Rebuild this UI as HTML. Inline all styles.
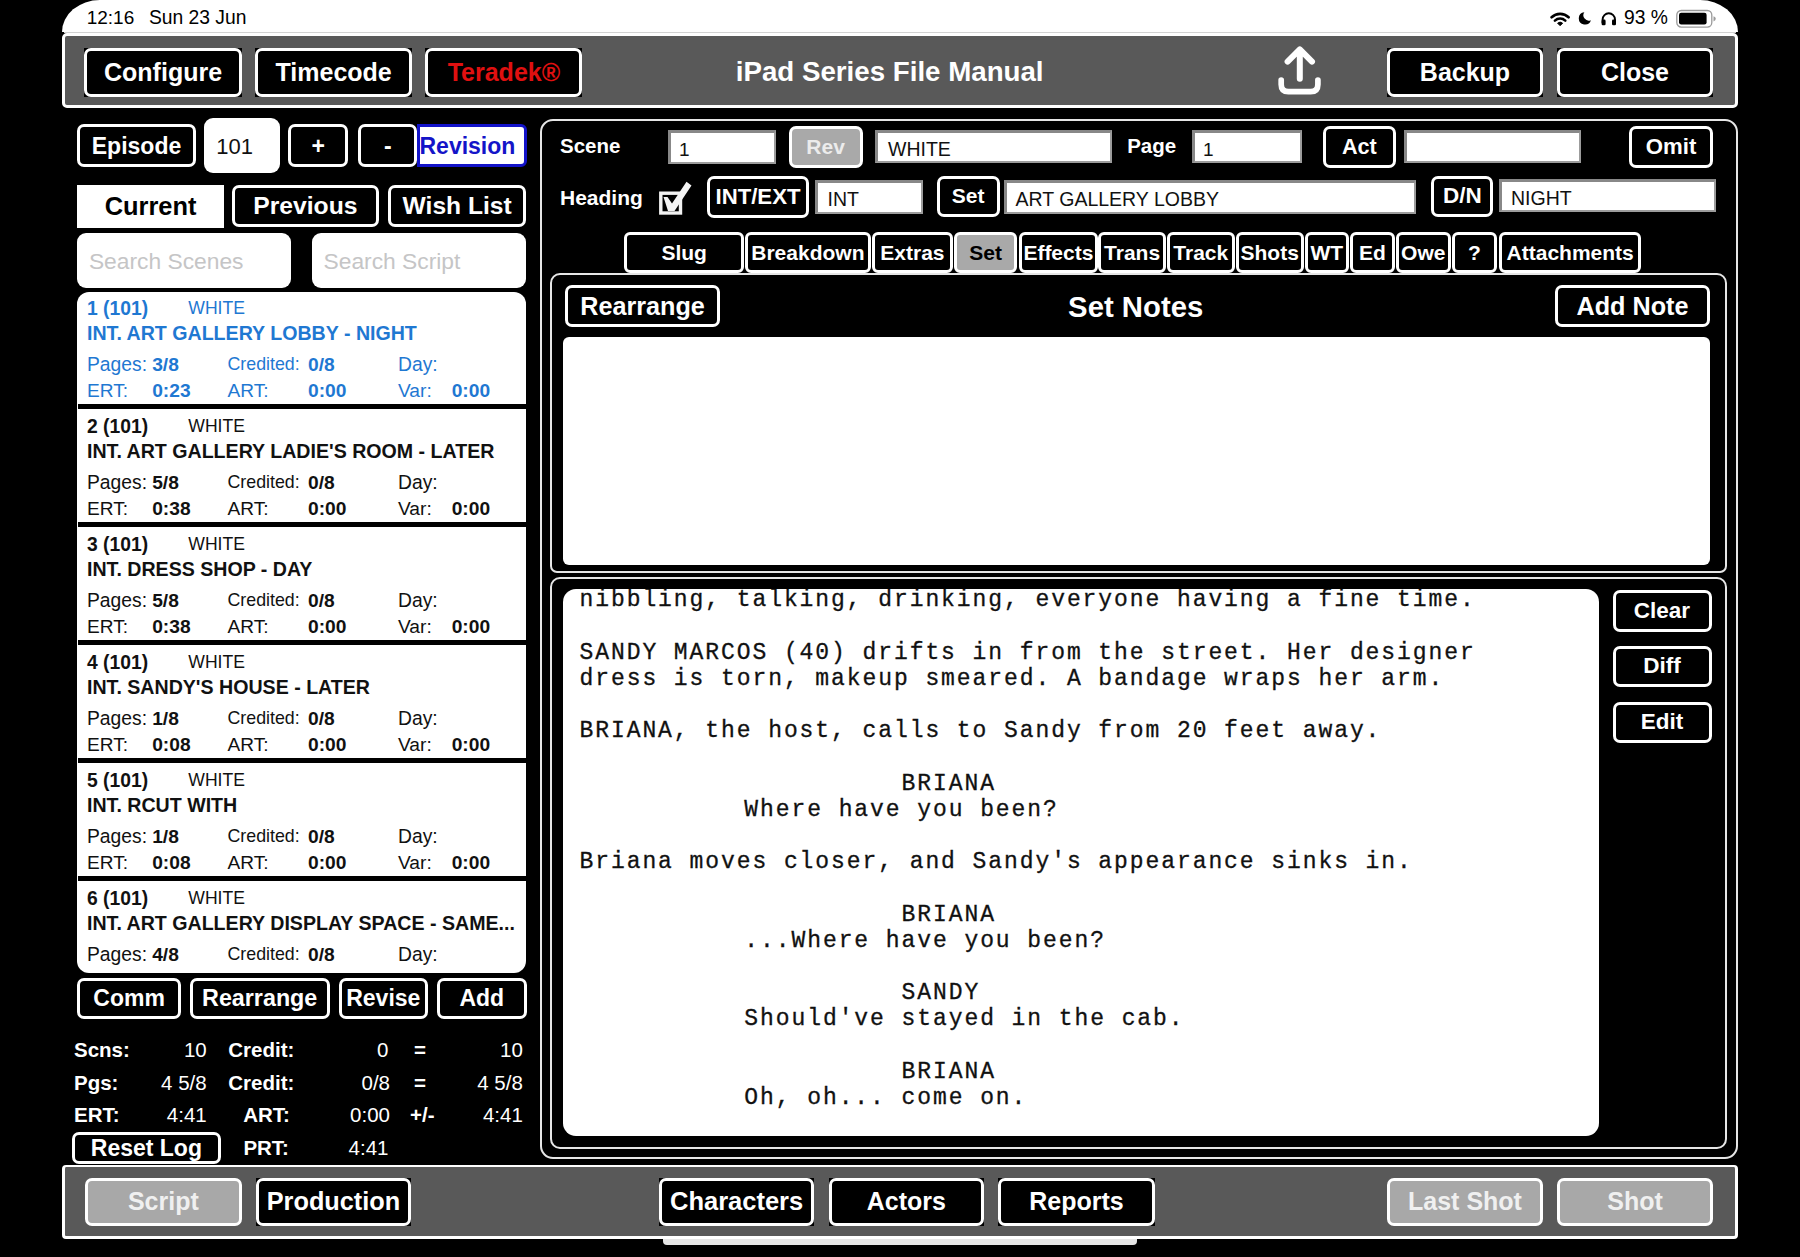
<!DOCTYPE html><html><head><meta charset="utf-8"><style>
html,body{margin:0;padding:0;background:#000;width:1800px;height:1257px;overflow:hidden;position:relative}
.b{position:absolute;box-sizing:border-box}
.bi{position:absolute;inset:0;box-sizing:border-box;display:flex;align-items:center;justify-content:center;font-family:"Liberation Sans",sans-serif;font-weight:700;white-space:pre}
</style></head><body>
<div style="position:absolute;left:62px;top:0px;width:1676px;height:32.2px;background:#fff;border-radius:38px 38px 0 0/32px 32px 0 0"></div>
<div style="position:absolute;left:64px;top:32.2px;width:1672px;height:1px;background:#d2d2d2"></div>
<div style="position:absolute;left:86.7px;top:7.8px;font:400 19px/19px 'Liberation Sans', sans-serif;color:#000;white-space:pre;">12:16</div>
<div style="position:absolute;left:148.9px;top:7.6px;font:400 19.3px/19.3px 'Liberation Sans', sans-serif;color:#000;white-space:pre;">Sun 23 Jun</div>
<div style="position:absolute;left:1624px;top:7.7px;font:400 19.3px/19.3px 'Liberation Sans', sans-serif;color:#000;white-space:pre;">93 %</div>
<div style="position:absolute;left:62px;top:32.8px;width:1676px;height:75.2px;background:#595959;border:3.3px solid #fff;border-radius:5px;box-sizing:border-box"></div>
<div class="b" style="left:84.4px;top:47.8px;width:157.3px;height:48.9px;background:#000;"><div class="bi" style="border:3px solid #fff;border-radius:7px;background:#000;color:#fff;font-size:25px;">Configure</div></div>
<div class="b" style="left:255px;top:47.8px;width:157.3px;height:48.9px;background:#000;"><div class="bi" style="border:3px solid #fff;border-radius:7px;background:#000;color:#fff;font-size:25px;">Timecode</div></div>
<div class="b" style="left:425.3px;top:47.8px;width:157.2px;height:48.9px;background:#000;"><div class="bi" style="border:3px solid #fff;border-radius:7px;background:#000;color:#e01010;font-size:25px;">Teradek®</div></div>
<div class="b" style="left:1386.7px;top:47.8px;width:156.6px;height:48.9px;background:#000;"><div class="bi" style="border:3px solid #fff;border-radius:7px;background:#000;color:#fff;font-size:25px;">Backup</div></div>
<div class="b" style="left:1556.7px;top:47.8px;width:156.6px;height:48.9px;background:#000;"><div class="bi" style="border:3px solid #fff;border-radius:7px;background:#000;color:#fff;font-size:25px;">Close</div></div>
<div style="position:absolute;left:389.7px;width:1000px;text-align:center;top:57.6px;font:700 27.7px/27.7px 'Liberation Sans', sans-serif;color:#fff;white-space:pre;">iPad Series File Manual</div>
<div class="b" style="left:77px;top:124.3px;width:119px;height:42.7px;background:#000;"><div class="bi" style="border:3px solid #fff;border-radius:7px;background:#000;color:#fff;font-size:23px;padding-top:1.5px">Episode</div></div>
<div style="position:absolute;left:204.4px;top:118px;width:75.3px;height:55.2px;background:#fff;border-radius:9px"></div>
<div style="position:absolute;left:216.3px;top:135.6px;font:400 22px/22px 'Liberation Sans', sans-serif;color:#111;white-space:pre;">101</div>
<div class="b" style="left:288.4px;top:124.4px;width:59.5px;height:42.2px;background:#000;"><div class="bi" style="border:3px solid #fff;border-radius:7px;background:#000;color:#fff;font-size:23px;padding-top:1.5px">+</div></div>
<div class="b" style="left:358.4px;top:124.4px;width:58.8px;height:42.2px;background:#000;"><div class="bi" style="border:3px solid #fff;border-radius:7px;background:#000;color:#fff;font-size:23px;padding-top:1.5px">-</div></div>
<div class="b" style="left:416.5px;top:124.4px;width:110.1px;height:43.1px;background:#fff;border:3px solid #1212c8;border-radius:0 6px 6px 0"><div class="bi" style="color:#1414c8;font-size:23px;justify-content:flex-start;padding-left:0px;padding-top:1.5px">Revision</div></div>
<div style="position:absolute;left:77px;top:185px;width:147.2px;height:42.8px;background:#fff"></div>
<div style="position:absolute;left:-349.4px;width:1000px;text-align:center;top:193.6px;font:700 25.4px/25.4px 'Liberation Sans', sans-serif;color:#000;white-space:pre;">Current</div>
<div class="b" style="left:232px;top:185.4px;width:146.7px;height:41.6px;background:#000;"><div class="bi" style="border:3px solid #fff;border-radius:7px;background:#000;color:#fff;font-size:24.7px;">Previous</div></div>
<div class="b" style="left:388px;top:185.4px;width:138.3px;height:41.6px;background:#000;"><div class="bi" style="border:3px solid #fff;border-radius:7px;background:#000;color:#fff;font-size:24.6px;">Wish List</div></div>
<div style="position:absolute;left:77px;top:232.7px;width:213.7px;height:54.9px;background:#fff;border-radius:9px"></div>
<div style="position:absolute;left:312px;top:232.7px;width:214px;height:54.9px;background:#fff;border-radius:9px"></div>
<div style="position:absolute;left:88.9px;top:249.5px;font:400 22.8px/22.8px 'Liberation Sans', sans-serif;color:#c5c5c6;white-space:pre;">Search Scenes</div>
<div style="position:absolute;left:323.5px;top:249.5px;font:400 22.8px/22.8px 'Liberation Sans', sans-serif;color:#c5c5c6;white-space:pre;">Search Script</div>
<div style="position:absolute;left:77px;top:291.8px;width:449px;height:681.6px;background:#fff;border-radius:12px;overflow:hidden">
<div style="position:absolute;left:10px;top:7.1px;font:700 19.3px/19.3px 'Liberation Sans', sans-serif;color:#1f78d2;white-space:pre;">1 (101)</div>
<div style="position:absolute;left:111.3px;top:8.5px;font:400 17.6px/17.6px 'Liberation Sans', sans-serif;color:#1f78d2;white-space:pre;">WHITE</div>
<div style="position:absolute;left:10px;top:31.8px;font:700 19.6px/19.6px 'Liberation Sans', sans-serif;color:#1f78d2;white-space:pre;">INT. ART GALLERY LOBBY - NIGHT</div>
<div style="position:absolute;left:10px;top:63.5px;font:400 19.3px/19.3px 'Liberation Sans', sans-serif;color:#1f78d2;white-space:pre;">Pages:</div>
<div style="position:absolute;left:75.2px;top:63.5px;font:700 19.2px/19.2px 'Liberation Sans', sans-serif;color:#1f78d2;white-space:pre;">3/8</div>
<div style="position:absolute;left:150.5px;top:64.7px;font:400 17.8px/17.8px 'Liberation Sans', sans-serif;color:#1f78d2;white-space:pre;">Credited:</div>
<div style="position:absolute;left:231px;top:63.5px;font:700 19.2px/19.2px 'Liberation Sans', sans-serif;color:#1f78d2;white-space:pre;">0/8</div>
<div style="position:absolute;left:321px;top:63.5px;font:400 19.3px/19.3px 'Liberation Sans', sans-serif;color:#1f78d2;white-space:pre;">Day:</div>
<div style="position:absolute;left:10px;top:89.2px;font:400 19.1px/19.1px 'Liberation Sans', sans-serif;color:#1f78d2;white-space:pre;">ERT:</div>
<div style="position:absolute;left:75.2px;top:89.1px;font:700 19.2px/19.2px 'Liberation Sans', sans-serif;color:#1f78d2;white-space:pre;">0:23</div>
<div style="position:absolute;left:150.5px;top:89.2px;font:400 19.1px/19.1px 'Liberation Sans', sans-serif;color:#1f78d2;white-space:pre;">ART:</div>
<div style="position:absolute;left:231px;top:89.1px;font:700 19.2px/19.2px 'Liberation Sans', sans-serif;color:#1f78d2;white-space:pre;">0:00</div>
<div style="position:absolute;left:321px;top:89.1px;font:400 19.2px/19.2px 'Liberation Sans', sans-serif;color:#1f78d2;white-space:pre;">Var:</div>
<div style="position:absolute;left:374.7px;top:89.1px;font:700 19.2px/19.2px 'Liberation Sans', sans-serif;color:#1f78d2;white-space:pre;">0:00</div>
<div style="position:absolute;left:1px;top:112.1px;width:448px;height:5.5px;background:#000"></div>
<div style="position:absolute;left:10px;top:125.1px;font:700 19.3px/19.3px 'Liberation Sans', sans-serif;color:#111;white-space:pre;">2 (101)</div>
<div style="position:absolute;left:111.3px;top:126.5px;font:400 17.6px/17.6px 'Liberation Sans', sans-serif;color:#111;white-space:pre;">WHITE</div>
<div style="position:absolute;left:10px;top:149.8px;font:700 19.6px/19.6px 'Liberation Sans', sans-serif;color:#111;white-space:pre;">INT. ART GALLERY LADIE'S ROOM - LATER</div>
<div style="position:absolute;left:10px;top:181.5px;font:400 19.3px/19.3px 'Liberation Sans', sans-serif;color:#111;white-space:pre;">Pages:</div>
<div style="position:absolute;left:75.2px;top:181.5px;font:700 19.2px/19.2px 'Liberation Sans', sans-serif;color:#111;white-space:pre;">5/8</div>
<div style="position:absolute;left:150.5px;top:182.7px;font:400 17.8px/17.8px 'Liberation Sans', sans-serif;color:#111;white-space:pre;">Credited:</div>
<div style="position:absolute;left:231px;top:181.5px;font:700 19.2px/19.2px 'Liberation Sans', sans-serif;color:#111;white-space:pre;">0/8</div>
<div style="position:absolute;left:321px;top:181.5px;font:400 19.3px/19.3px 'Liberation Sans', sans-serif;color:#111;white-space:pre;">Day:</div>
<div style="position:absolute;left:10px;top:207.2px;font:400 19.1px/19.1px 'Liberation Sans', sans-serif;color:#111;white-space:pre;">ERT:</div>
<div style="position:absolute;left:75.2px;top:207.1px;font:700 19.2px/19.2px 'Liberation Sans', sans-serif;color:#111;white-space:pre;">0:38</div>
<div style="position:absolute;left:150.5px;top:207.2px;font:400 19.1px/19.1px 'Liberation Sans', sans-serif;color:#111;white-space:pre;">ART:</div>
<div style="position:absolute;left:231px;top:207.1px;font:700 19.2px/19.2px 'Liberation Sans', sans-serif;color:#111;white-space:pre;">0:00</div>
<div style="position:absolute;left:321px;top:207.1px;font:400 19.2px/19.2px 'Liberation Sans', sans-serif;color:#111;white-space:pre;">Var:</div>
<div style="position:absolute;left:374.7px;top:207.1px;font:700 19.2px/19.2px 'Liberation Sans', sans-serif;color:#111;white-space:pre;">0:00</div>
<div style="position:absolute;left:1px;top:230.1px;width:448px;height:5.5px;background:#000"></div>
<div style="position:absolute;left:10px;top:243.1px;font:700 19.3px/19.3px 'Liberation Sans', sans-serif;color:#111;white-space:pre;">3 (101)</div>
<div style="position:absolute;left:111.3px;top:244.5px;font:400 17.6px/17.6px 'Liberation Sans', sans-serif;color:#111;white-space:pre;">WHITE</div>
<div style="position:absolute;left:10px;top:267.8px;font:700 19.6px/19.6px 'Liberation Sans', sans-serif;color:#111;white-space:pre;">INT. DRESS SHOP - DAY</div>
<div style="position:absolute;left:10px;top:299.5px;font:400 19.3px/19.3px 'Liberation Sans', sans-serif;color:#111;white-space:pre;">Pages:</div>
<div style="position:absolute;left:75.2px;top:299.5px;font:700 19.2px/19.2px 'Liberation Sans', sans-serif;color:#111;white-space:pre;">5/8</div>
<div style="position:absolute;left:150.5px;top:300.7px;font:400 17.8px/17.8px 'Liberation Sans', sans-serif;color:#111;white-space:pre;">Credited:</div>
<div style="position:absolute;left:231px;top:299.5px;font:700 19.2px/19.2px 'Liberation Sans', sans-serif;color:#111;white-space:pre;">0/8</div>
<div style="position:absolute;left:321px;top:299.5px;font:400 19.3px/19.3px 'Liberation Sans', sans-serif;color:#111;white-space:pre;">Day:</div>
<div style="position:absolute;left:10px;top:325.2px;font:400 19.1px/19.1px 'Liberation Sans', sans-serif;color:#111;white-space:pre;">ERT:</div>
<div style="position:absolute;left:75.2px;top:325.1px;font:700 19.2px/19.2px 'Liberation Sans', sans-serif;color:#111;white-space:pre;">0:38</div>
<div style="position:absolute;left:150.5px;top:325.2px;font:400 19.1px/19.1px 'Liberation Sans', sans-serif;color:#111;white-space:pre;">ART:</div>
<div style="position:absolute;left:231px;top:325.1px;font:700 19.2px/19.2px 'Liberation Sans', sans-serif;color:#111;white-space:pre;">0:00</div>
<div style="position:absolute;left:321px;top:325.1px;font:400 19.2px/19.2px 'Liberation Sans', sans-serif;color:#111;white-space:pre;">Var:</div>
<div style="position:absolute;left:374.7px;top:325.1px;font:700 19.2px/19.2px 'Liberation Sans', sans-serif;color:#111;white-space:pre;">0:00</div>
<div style="position:absolute;left:1px;top:348.1px;width:448px;height:5.5px;background:#000"></div>
<div style="position:absolute;left:10px;top:361.1px;font:700 19.3px/19.3px 'Liberation Sans', sans-serif;color:#111;white-space:pre;">4 (101)</div>
<div style="position:absolute;left:111.3px;top:362.5px;font:400 17.6px/17.6px 'Liberation Sans', sans-serif;color:#111;white-space:pre;">WHITE</div>
<div style="position:absolute;left:10px;top:385.8px;font:700 19.6px/19.6px 'Liberation Sans', sans-serif;color:#111;white-space:pre;">INT. SANDY'S HOUSE - LATER</div>
<div style="position:absolute;left:10px;top:417.5px;font:400 19.3px/19.3px 'Liberation Sans', sans-serif;color:#111;white-space:pre;">Pages:</div>
<div style="position:absolute;left:75.2px;top:417.5px;font:700 19.2px/19.2px 'Liberation Sans', sans-serif;color:#111;white-space:pre;">1/8</div>
<div style="position:absolute;left:150.5px;top:418.7px;font:400 17.8px/17.8px 'Liberation Sans', sans-serif;color:#111;white-space:pre;">Credited:</div>
<div style="position:absolute;left:231px;top:417.5px;font:700 19.2px/19.2px 'Liberation Sans', sans-serif;color:#111;white-space:pre;">0/8</div>
<div style="position:absolute;left:321px;top:417.5px;font:400 19.3px/19.3px 'Liberation Sans', sans-serif;color:#111;white-space:pre;">Day:</div>
<div style="position:absolute;left:10px;top:443.2px;font:400 19.1px/19.1px 'Liberation Sans', sans-serif;color:#111;white-space:pre;">ERT:</div>
<div style="position:absolute;left:75.2px;top:443.1px;font:700 19.2px/19.2px 'Liberation Sans', sans-serif;color:#111;white-space:pre;">0:08</div>
<div style="position:absolute;left:150.5px;top:443.2px;font:400 19.1px/19.1px 'Liberation Sans', sans-serif;color:#111;white-space:pre;">ART:</div>
<div style="position:absolute;left:231px;top:443.1px;font:700 19.2px/19.2px 'Liberation Sans', sans-serif;color:#111;white-space:pre;">0:00</div>
<div style="position:absolute;left:321px;top:443.1px;font:400 19.2px/19.2px 'Liberation Sans', sans-serif;color:#111;white-space:pre;">Var:</div>
<div style="position:absolute;left:374.7px;top:443.1px;font:700 19.2px/19.2px 'Liberation Sans', sans-serif;color:#111;white-space:pre;">0:00</div>
<div style="position:absolute;left:1px;top:466.1px;width:448px;height:5.5px;background:#000"></div>
<div style="position:absolute;left:10px;top:479.1px;font:700 19.3px/19.3px 'Liberation Sans', sans-serif;color:#111;white-space:pre;">5 (101)</div>
<div style="position:absolute;left:111.3px;top:480.5px;font:400 17.6px/17.6px 'Liberation Sans', sans-serif;color:#111;white-space:pre;">WHITE</div>
<div style="position:absolute;left:10px;top:503.8px;font:700 19.6px/19.6px 'Liberation Sans', sans-serif;color:#111;white-space:pre;">INT. RCUT WITH</div>
<div style="position:absolute;left:10px;top:535.5px;font:400 19.3px/19.3px 'Liberation Sans', sans-serif;color:#111;white-space:pre;">Pages:</div>
<div style="position:absolute;left:75.2px;top:535.5px;font:700 19.2px/19.2px 'Liberation Sans', sans-serif;color:#111;white-space:pre;">1/8</div>
<div style="position:absolute;left:150.5px;top:536.7px;font:400 17.8px/17.8px 'Liberation Sans', sans-serif;color:#111;white-space:pre;">Credited:</div>
<div style="position:absolute;left:231px;top:535.5px;font:700 19.2px/19.2px 'Liberation Sans', sans-serif;color:#111;white-space:pre;">0/8</div>
<div style="position:absolute;left:321px;top:535.5px;font:400 19.3px/19.3px 'Liberation Sans', sans-serif;color:#111;white-space:pre;">Day:</div>
<div style="position:absolute;left:10px;top:561.2px;font:400 19.1px/19.1px 'Liberation Sans', sans-serif;color:#111;white-space:pre;">ERT:</div>
<div style="position:absolute;left:75.2px;top:561.1px;font:700 19.2px/19.2px 'Liberation Sans', sans-serif;color:#111;white-space:pre;">0:08</div>
<div style="position:absolute;left:150.5px;top:561.2px;font:400 19.1px/19.1px 'Liberation Sans', sans-serif;color:#111;white-space:pre;">ART:</div>
<div style="position:absolute;left:231px;top:561.1px;font:700 19.2px/19.2px 'Liberation Sans', sans-serif;color:#111;white-space:pre;">0:00</div>
<div style="position:absolute;left:321px;top:561.1px;font:400 19.2px/19.2px 'Liberation Sans', sans-serif;color:#111;white-space:pre;">Var:</div>
<div style="position:absolute;left:374.7px;top:561.1px;font:700 19.2px/19.2px 'Liberation Sans', sans-serif;color:#111;white-space:pre;">0:00</div>
<div style="position:absolute;left:1px;top:584.1px;width:448px;height:5.5px;background:#000"></div>
<div style="position:absolute;left:10px;top:597.1px;font:700 19.3px/19.3px 'Liberation Sans', sans-serif;color:#111;white-space:pre;">6 (101)</div>
<div style="position:absolute;left:111.3px;top:598.5px;font:400 17.6px/17.6px 'Liberation Sans', sans-serif;color:#111;white-space:pre;">WHITE</div>
<div style="position:absolute;left:10px;top:621.8px;font:700 19.6px/19.6px 'Liberation Sans', sans-serif;color:#111;white-space:pre;">INT. ART GALLERY DISPLAY SPACE - SAME...</div>
<div style="position:absolute;left:10px;top:653.5px;font:400 19.3px/19.3px 'Liberation Sans', sans-serif;color:#111;white-space:pre;">Pages:</div>
<div style="position:absolute;left:75.2px;top:653.5px;font:700 19.2px/19.2px 'Liberation Sans', sans-serif;color:#111;white-space:pre;">4/8</div>
<div style="position:absolute;left:150.5px;top:654.7px;font:400 17.8px/17.8px 'Liberation Sans', sans-serif;color:#111;white-space:pre;">Credited:</div>
<div style="position:absolute;left:231px;top:653.5px;font:700 19.2px/19.2px 'Liberation Sans', sans-serif;color:#111;white-space:pre;">0/8</div>
<div style="position:absolute;left:321px;top:653.5px;font:400 19.3px/19.3px 'Liberation Sans', sans-serif;color:#111;white-space:pre;">Day:</div>
<div style="position:absolute;left:10px;top:679.2px;font:400 19.1px/19.1px 'Liberation Sans', sans-serif;color:#111;white-space:pre;">ERT:</div>
<div style="position:absolute;left:75.2px;top:679.1px;font:700 19.2px/19.2px 'Liberation Sans', sans-serif;color:#111;white-space:pre;">0:08</div>
<div style="position:absolute;left:150.5px;top:679.2px;font:400 19.1px/19.1px 'Liberation Sans', sans-serif;color:#111;white-space:pre;">ART:</div>
<div style="position:absolute;left:231px;top:679.1px;font:700 19.2px/19.2px 'Liberation Sans', sans-serif;color:#111;white-space:pre;">0:00</div>
<div style="position:absolute;left:321px;top:679.1px;font:400 19.2px/19.2px 'Liberation Sans', sans-serif;color:#111;white-space:pre;">Var:</div>
<div style="position:absolute;left:374.7px;top:679.1px;font:700 19.2px/19.2px 'Liberation Sans', sans-serif;color:#111;white-space:pre;">0:00</div>
<div style="position:absolute;left:1px;top:702.1px;width:448px;height:5.5px;background:#000"></div>
</div>
<div class="b" style="left:77.3px;top:978.4px;width:103.7px;height:41.1px;background:#000;"><div class="bi" style="border:3px solid #fff;border-radius:7px;background:#000;color:#fff;font-size:23px;">Comm</div></div>
<div class="b" style="left:189.8px;top:978.4px;width:139.8px;height:41.1px;background:#000;"><div class="bi" style="border:3px solid #fff;border-radius:7px;background:#000;color:#fff;font-size:23.3px;">Rearrange</div></div>
<div class="b" style="left:338.9px;top:978.4px;width:88.8px;height:41.1px;background:#000;"><div class="bi" style="border:3px solid #fff;border-radius:7px;background:#000;color:#fff;font-size:23px;">Revise</div></div>
<div class="b" style="left:437px;top:978.4px;width:89.6px;height:41.1px;background:#000;"><div class="bi" style="border:3px solid #fff;border-radius:7px;background:#000;color:#fff;font-size:23px;">Add</div></div>
<div style="position:absolute;left:74px;top:1040.2px;font:700 20.5px/20.5px 'Liberation Sans', sans-serif;color:#fff;white-space:pre;">Scns:</div>
<div style="position:absolute;right:1593.3px;top:1040.2px;font:400 20.5px/20.5px 'Liberation Sans', sans-serif;color:#fff;white-space:pre;">10</div>
<div style="position:absolute;left:228.3px;top:1040.2px;font:700 20.5px/20.5px 'Liberation Sans', sans-serif;color:#fff;white-space:pre;">Credit:</div>
<div style="position:absolute;right:1411.5px;top:1040.2px;font:400 20.5px/20.5px 'Liberation Sans', sans-serif;color:#fff;white-space:pre;">0</div>
<div style="position:absolute;left:414px;top:1040.2px;font:700 20.5px/20.5px 'Liberation Sans', sans-serif;color:#fff;white-space:pre;">=</div>
<div style="position:absolute;right:1277.2px;top:1040.2px;font:400 20.5px/20.5px 'Liberation Sans', sans-serif;color:#fff;white-space:pre;">10</div>
<div style="position:absolute;left:74px;top:1072.5px;font:700 20.5px/20.5px 'Liberation Sans', sans-serif;color:#fff;white-space:pre;">Pgs:</div>
<div style="position:absolute;right:1593.3px;top:1072.5px;font:400 20.5px/20.5px 'Liberation Sans', sans-serif;color:#fff;white-space:pre;">4 5/8</div>
<div style="position:absolute;left:228.3px;top:1072.5px;font:700 20.5px/20.5px 'Liberation Sans', sans-serif;color:#fff;white-space:pre;">Credit:</div>
<div style="position:absolute;right:1410px;top:1072.5px;font:400 20.5px/20.5px 'Liberation Sans', sans-serif;color:#fff;white-space:pre;">0/8</div>
<div style="position:absolute;left:414px;top:1072.5px;font:700 20.5px/20.5px 'Liberation Sans', sans-serif;color:#fff;white-space:pre;">=</div>
<div style="position:absolute;right:1277.2px;top:1072.5px;font:400 20.5px/20.5px 'Liberation Sans', sans-serif;color:#fff;white-space:pre;">4 5/8</div>
<div style="position:absolute;left:74px;top:1105.1px;font:700 20.5px/20.5px 'Liberation Sans', sans-serif;color:#fff;white-space:pre;">ERT:</div>
<div style="position:absolute;right:1593.3px;top:1105.1px;font:400 20.5px/20.5px 'Liberation Sans', sans-serif;color:#fff;white-space:pre;">4:41</div>
<div style="position:absolute;left:243.2px;top:1105.1px;font:700 20.5px/20.5px 'Liberation Sans', sans-serif;color:#fff;white-space:pre;">ART:</div>
<div style="position:absolute;right:1410px;top:1105.1px;font:400 20.5px/20.5px 'Liberation Sans', sans-serif;color:#fff;white-space:pre;">0:00</div>
<div style="position:absolute;left:410px;top:1105.1px;font:700 20.5px/20.5px 'Liberation Sans', sans-serif;color:#fff;white-space:pre;">+/-</div>
<div style="position:absolute;right:1277.2px;top:1105.1px;font:400 20.5px/20.5px 'Liberation Sans', sans-serif;color:#fff;white-space:pre;">4:41</div>
<div class="b" style="left:72.2px;top:1131.7px;width:148.4px;height:31.9px;background:#000;"><div class="bi" style="border:3px solid #fff;border-radius:7px;background:#000;color:#fff;font-size:23px;padding-top:2.5px">Reset Log</div></div>
<div style="position:absolute;left:243.4px;top:1137.8px;font:700 20.5px/20.5px 'Liberation Sans', sans-serif;color:#fff;white-space:pre;">PRT:</div>
<div style="position:absolute;right:1411.5px;top:1137.8px;font:400 20.5px/20.5px 'Liberation Sans', sans-serif;color:#fff;white-space:pre;">4:41</div>
<div style="position:absolute;left:540px;top:118.5px;width:1198px;height:1040px;border:2px solid #e6e6e6;border-radius:13px;box-sizing:border-box"></div>
<div style="position:absolute;left:560px;top:136.4px;font:700 20.5px/20.5px 'Liberation Sans', sans-serif;color:#fff;white-space:pre;">Scene</div>
<div style="position:absolute;left:668px;top:130px;width:107.7px;height:33.7px;background:#fff;border-top:3px solid #888;border-left:3px solid #888;border-right:2px solid #9c9c9c;border-bottom:2px solid #9c9c9c;box-sizing:border-box"></div>
<div style="position:absolute;left:679px;top:139.6px;font:400 19px/19px 'Liberation Sans', sans-serif;color:#111;white-space:pre;">1</div>
<div class="b" style="left:788.7px;top:126.3px;width:73.9px;height:42.2px;background:#000"><div class="bi" style="border:3px solid #fff;border-radius:7px;background:#a9a9a9;color:#ececec;font-size:21px">Rev</div></div>
<div style="position:absolute;left:875.3px;top:130.2px;width:237.2px;height:33px;background:#fff;border-top:3px solid #888;border-left:3px solid #888;border-right:2px solid #9c9c9c;border-bottom:2px solid #9c9c9c;box-sizing:border-box"></div>
<div style="position:absolute;left:888px;top:139.7px;font:400 19.5px/19.5px 'Liberation Sans', sans-serif;color:#111;white-space:pre;">WHITE</div>
<div style="position:absolute;left:1127.2px;top:136.4px;font:700 20.5px/20.5px 'Liberation Sans', sans-serif;color:#fff;white-space:pre;">Page</div>
<div style="position:absolute;left:1192.4px;top:130.2px;width:109.8px;height:33px;background:#fff;border-top:3px solid #888;border-left:3px solid #888;border-right:2px solid #9c9c9c;border-bottom:2px solid #9c9c9c;box-sizing:border-box"></div>
<div style="position:absolute;left:1203px;top:139.6px;font:400 19px/19px 'Liberation Sans', sans-serif;color:#111;white-space:pre;">1</div>
<div class="b" style="left:1322.6px;top:126px;width:73.4px;height:42.3px;background:#000;"><div class="bi" style="border:3px solid #fff;border-radius:7px;background:#000;color:#fff;font-size:21.6px;">Act</div></div>
<div style="position:absolute;left:1403.7px;top:130.2px;width:177.3px;height:33px;background:#fff;border-top:3px solid #888;border-left:3px solid #888;border-right:2px solid #9c9c9c;border-bottom:2px solid #9c9c9c;box-sizing:border-box"></div>
<div class="b" style="left:1629px;top:126px;width:84.2px;height:42.3px;background:#000;"><div class="bi" style="border:3px solid #fff;border-radius:7px;background:#000;color:#fff;font-size:22.2px;">Omit</div></div>
<div style="position:absolute;left:560px;top:186.7px;font:700 21px/21px 'Liberation Sans', sans-serif;color:#fff;white-space:pre;">Heading</div>
<svg style="position:absolute;left:657px;top:180px" width="38" height="36" viewBox="0 0 38 36">
<rect x="3.8" y="13.2" width="19.7" height="19.8" fill="none" stroke="#f2f2f2" stroke-width="3.4"/>
<path d="M6.5 17 L10.5 17 L15 23.5 L29.5 1.8 L34.5 5.5 L17.5 31 L11 31 Z" fill="#f4f4f4"/>
</svg>
<div class="b" style="left:707px;top:176px;width:102px;height:41.7px;background:#000;"><div class="bi" style="border:3px solid #fff;border-radius:7px;background:#000;color:#fff;font-size:22.2px;">INT/EXT</div></div>
<div style="position:absolute;left:815.4px;top:180px;width:107.6px;height:34.2px;background:#fff;border-top:3px solid #888;border-left:3px solid #888;border-right:2px solid #9c9c9c;border-bottom:2px solid #9c9c9c;box-sizing:border-box"></div>
<div style="position:absolute;left:827.5px;top:190.3px;font:400 19.5px/19.5px 'Liberation Sans', sans-serif;color:#111;white-space:pre;">INT</div>
<div class="b" style="left:936.5px;top:175.7px;width:63.2px;height:41.4px;background:#000;"><div class="bi" style="border:3px solid #fff;border-radius:7px;background:#000;color:#fff;font-size:21px;">Set</div></div>
<div style="position:absolute;left:1003.6px;top:180px;width:412.9px;height:34.2px;background:#fff;border-top:3px solid #888;border-left:3px solid #888;border-right:2px solid #9c9c9c;border-bottom:2px solid #9c9c9c;box-sizing:border-box"></div>
<div style="position:absolute;left:1015.5px;top:190.3px;font:400 19.5px/19.5px 'Liberation Sans', sans-serif;color:#111;white-space:pre;">ART GALLERY LOBBY</div>
<div class="b" style="left:1431.3px;top:175.7px;width:62.2px;height:41.3px;background:#000;"><div class="bi" style="border:3px solid #fff;border-radius:7px;background:#000;color:#fff;font-size:22.5px;">D/N</div></div>
<div style="position:absolute;left:1499.3px;top:178.8px;width:216.7px;height:33.4px;background:#fff;border-top:3px solid #888;border-left:3px solid #888;border-right:2px solid #9c9c9c;border-bottom:2px solid #9c9c9c;box-sizing:border-box"></div>
<div style="position:absolute;left:1511px;top:188.5px;font:400 19.5px/19.5px 'Liberation Sans', sans-serif;color:#111;white-space:pre;">NIGHT</div>
<div class="b" style="left:624.2px;top:231.5px;width:119.9px;height:41.1px;background:#000;"><div class="bi" style="border:3px solid #fff;border-radius:6px;background:#000;color:#fff;font-size:21px;padding-top:1.5px">Slug</div></div>
<div class="b" style="left:744.8px;top:231.5px;width:126.2px;height:41.1px;background:#000;"><div class="bi" style="border:3px solid #fff;border-radius:6px;background:#000;color:#fff;font-size:21px;padding-top:1.5px">Breakdown</div></div>
<div class="b" style="left:872px;top:231.5px;width:80.8px;height:41.1px;background:#000;"><div class="bi" style="border:3px solid #fff;border-radius:6px;background:#000;color:#fff;font-size:21px;padding-top:1.5px">Extras</div></div>
<div class="b" style="left:954px;top:231.5px;width:63.4px;height:41.1px;background:#000"><div class="bi" style="border:3px solid #fff;border-radius:6px;background:#a9a9a9;color:#000;font-size:21px;padding-top:1.5px">Set</div></div>
<div class="b" style="left:1019px;top:231.5px;width:78.8px;height:41.1px;background:#000;"><div class="bi" style="border:3px solid #fff;border-radius:6px;background:#000;color:#fff;font-size:21px;padding-top:1.5px">Effects</div></div>
<div class="b" style="left:1098.4px;top:231.5px;width:67.4px;height:41.1px;background:#000;"><div class="bi" style="border:3px solid #fff;border-radius:6px;background:#000;color:#fff;font-size:21px;padding-top:1.5px">Trans</div></div>
<div class="b" style="left:1166.8px;top:231.5px;width:68px;height:41.1px;background:#000;"><div class="bi" style="border:3px solid #fff;border-radius:6px;background:#000;color:#fff;font-size:21px;padding-top:1.5px">Track</div></div>
<div class="b" style="left:1235.7px;top:231.5px;width:68px;height:41.1px;background:#000;"><div class="bi" style="border:3px solid #fff;border-radius:6px;background:#000;color:#fff;font-size:21px;padding-top:1.5px">Shots</div></div>
<div class="b" style="left:1304.7px;top:231.5px;width:44.2px;height:41.1px;background:#000;"><div class="bi" style="border:3px solid #fff;border-radius:6px;background:#000;color:#fff;font-size:21px;padding-top:1.5px">WT</div></div>
<div class="b" style="left:1349.8px;top:231.5px;width:45.3px;height:41.1px;background:#000;"><div class="bi" style="border:3px solid #fff;border-radius:6px;background:#000;color:#fff;font-size:21px;padding-top:1.5px">Ed</div></div>
<div class="b" style="left:1396px;top:231.5px;width:54.6px;height:41.1px;background:#000;"><div class="bi" style="border:3px solid #fff;border-radius:6px;background:#000;color:#fff;font-size:21px;padding-top:1.5px">Owe</div></div>
<div class="b" style="left:1451.6px;top:231.5px;width:45.7px;height:41.1px;background:#000;"><div class="bi" style="border:3px solid #fff;border-radius:6px;background:#000;color:#fff;font-size:21px;padding-top:1.5px">?</div></div>
<div class="b" style="left:1499.1px;top:231.5px;width:142.2px;height:41.1px;background:#000;"><div class="bi" style="border:3px solid #fff;border-radius:6px;background:#000;color:#fff;font-size:21px;padding-top:1.5px">Attachments</div></div>
<div style="position:absolute;left:550px;top:272.5px;width:1177px;height:300.5px;border:2px solid #e6e6e6;border-radius:10px 10px 7px 7px;box-sizing:border-box"></div>
<div class="b" style="left:565px;top:285px;width:155px;height:42.2px;background:#000;"><div class="bi" style="border:3px solid #fff;border-radius:7px;background:#000;color:#fff;font-size:25.2px;">Rearrange</div></div>
<div style="position:absolute;left:635.7px;width:1000px;text-align:center;top:292.4px;font:700 29.3px/29.3px 'Liberation Sans', sans-serif;color:#fff;white-space:pre;">Set Notes</div>
<div class="b" style="left:1555.2px;top:285.2px;width:154.6px;height:42px;background:#000;"><div class="bi" style="border:3px solid #fff;border-radius:7px;background:#000;color:#fff;font-size:25.2px;">Add Note</div></div>
<div style="position:absolute;left:563px;top:337.3px;width:1147px;height:227.4px;background:#fff;border-radius:6px"></div>
<div style="position:absolute;left:550px;top:576.5px;width:1177px;height:572px;border:2px solid #e6e6e6;border-radius:10px;box-sizing:border-box"></div>
<div style="position:absolute;left:563px;top:589.4px;width:1036px;height:546.2px;background:#fff;border-radius:13px"></div>
<div class="b" style="left:1612.5px;top:590.4px;width:99px;height:41.3px;background:#000;"><div class="bi" style="border:3px solid #fff;border-radius:7px;background:#000;color:#fff;font-size:22.5px;">Clear</div></div>
<div class="b" style="left:1612.5px;top:645.6px;width:99px;height:41.5px;background:#000;"><div class="bi" style="border:3px solid #fff;border-radius:7px;background:#000;color:#fff;font-size:22.5px;">Diff</div></div>
<div class="b" style="left:1612.5px;top:701.5px;width:99px;height:41.5px;background:#000;"><div class="bi" style="border:3px solid #fff;border-radius:7px;background:#000;color:#fff;font-size:22.5px;">Edit</div></div>
<div style="position:absolute;left:563px;top:589.4px;width:1036px;height:546.2px;overflow:hidden;border-radius:13px">
<div style="position:absolute;left:16.5px;top:-0.2px;font:400 23px/23px 'Liberation Mono', monospace;color:#111;white-space:pre;letter-spacing:1.92px;-webkit-text-stroke:0.3px #111">nibbling, talking, drinking, everyone having a fine time.</div>
<div style="position:absolute;left:16.5px;top:52.2px;font:400 23px/23px 'Liberation Mono', monospace;color:#111;white-space:pre;letter-spacing:1.92px;-webkit-text-stroke:0.3px #111">SANDY MARCOS (40) drifts in from the street. Her designer</div>
<div style="position:absolute;left:16.5px;top:78.4px;font:400 23px/23px 'Liberation Mono', monospace;color:#111;white-space:pre;letter-spacing:1.92px;-webkit-text-stroke:0.3px #111">dress is torn, makeup smeared. A bandage wraps her arm.</div>
<div style="position:absolute;left:16.5px;top:130.8px;font:400 23px/23px 'Liberation Mono', monospace;color:#111;white-space:pre;letter-spacing:1.92px;-webkit-text-stroke:0.3px #111">BRIANA, the host, calls to Sandy from 20 feet away.</div>
<div style="position:absolute;left:24.1px;top:183.2px;font:400 23px/23px 'Liberation Mono', monospace;color:#111;white-space:pre;letter-spacing:1.92px;-webkit-text-stroke:0.3px #111">                    BRIANA</div>
<div style="position:absolute;left:24.1px;top:209.4px;font:400 23px/23px 'Liberation Mono', monospace;color:#111;white-space:pre;letter-spacing:1.92px;-webkit-text-stroke:0.3px #111">          Where have you been?</div>
<div style="position:absolute;left:16.5px;top:261.8px;font:400 23px/23px 'Liberation Mono', monospace;color:#111;white-space:pre;letter-spacing:1.92px;-webkit-text-stroke:0.3px #111">Briana moves closer, and Sandy's appearance sinks in.</div>
<div style="position:absolute;left:24.1px;top:314.2px;font:400 23px/23px 'Liberation Mono', monospace;color:#111;white-space:pre;letter-spacing:1.92px;-webkit-text-stroke:0.3px #111">                    BRIANA</div>
<div style="position:absolute;left:24.1px;top:340.4px;font:400 23px/23px 'Liberation Mono', monospace;color:#111;white-space:pre;letter-spacing:1.92px;-webkit-text-stroke:0.3px #111">          ...Where have you been?</div>
<div style="position:absolute;left:24.1px;top:392.8px;font:400 23px/23px 'Liberation Mono', monospace;color:#111;white-space:pre;letter-spacing:1.92px;-webkit-text-stroke:0.3px #111">                    SANDY</div>
<div style="position:absolute;left:24.1px;top:419px;font:400 23px/23px 'Liberation Mono', monospace;color:#111;white-space:pre;letter-spacing:1.92px;-webkit-text-stroke:0.3px #111">          Should've stayed in the cab.</div>
<div style="position:absolute;left:24.1px;top:471.4px;font:400 23px/23px 'Liberation Mono', monospace;color:#111;white-space:pre;letter-spacing:1.92px;-webkit-text-stroke:0.3px #111">                    BRIANA</div>
<div style="position:absolute;left:24.1px;top:497.6px;font:400 23px/23px 'Liberation Mono', monospace;color:#111;white-space:pre;letter-spacing:1.92px;-webkit-text-stroke:0.3px #111">          Oh, oh... come on.</div>
</div>
<div style="position:absolute;left:62px;top:1165px;width:1676px;height:73.9px;background:#595959;border:3px solid #fff;border-top-width:2.8px;border-radius:4px;box-sizing:border-box"></div>
<div class="b" style="left:84.7px;top:1177.6px;width:157.3px;height:48.5px;background:#595959"><div class="bi" style="border:3px solid #fff;border-radius:7px;background:#a8a8a8;color:#f0f0f0;font-size:25px">Script</div></div>
<div class="b" style="left:255.7px;top:1177.6px;width:155.6px;height:48.5px;background:#000;"><div class="bi" style="border:3px solid #fff;border-radius:7px;background:#000;color:#fff;font-size:25.3px;">Production</div></div>
<div class="b" style="left:658.8px;top:1177.6px;width:155.6px;height:48.5px;background:#000;"><div class="bi" style="border:3px solid #fff;border-radius:7px;background:#000;color:#fff;font-size:25.5px;">Characters</div></div>
<div class="b" style="left:828.5px;top:1177.6px;width:155.6px;height:48.5px;background:#000;"><div class="bi" style="border:3px solid #fff;border-radius:7px;background:#000;color:#fff;font-size:25px;">Actors</div></div>
<div class="b" style="left:998.2px;top:1177.6px;width:156.7px;height:48.5px;background:#000;"><div class="bi" style="border:3px solid #fff;border-radius:7px;background:#000;color:#fff;font-size:25px;">Reports</div></div>
<div class="b" style="left:1386.7px;top:1177.6px;width:156.6px;height:48.5px;background:#595959"><div class="bi" style="border:3px solid #fff;border-radius:7px;background:#a8a8a8;color:#f0f0f0;font-size:25px">Last Shot</div></div>
<div class="b" style="left:1556.7px;top:1177.6px;width:156.6px;height:48.5px;background:#595959"><div class="bi" style="border:3px solid #fff;border-radius:7px;background:#a8a8a8;color:#f0f0f0;font-size:25px">Shot</div></div>
<div style="position:absolute;left:663px;top:1238.6px;width:474px;height:6.9px;background:#e6e6e6;border-radius:0 0 4px 4px"></div>
<svg style="position:absolute;left:1274px;top:42px" width="52" height="56" viewBox="0 0 52 56">
<path d="M25.8 36.8 V9 M13.6 19.6 L25.8 7.4 L38 19.6" fill="none" stroke="#fff" stroke-width="6" stroke-linecap="round" stroke-linejoin="round"/>
<path d="M7.2 38 V42.5 Q7.2 49.7 14.4 49.7 H36.7 Q43.9 49.7 43.9 42.5 V38" fill="none" stroke="#fff" stroke-width="5.7" stroke-linecap="round" stroke-linejoin="round"/>
</svg>
<svg style="position:absolute;left:1549.8px;top:11.6px" width="21" height="14" viewBox="0 0 21 14">
<path d="M1.6 5.3 A12.2 12.2 0 0 1 18.6 5.3" fill="none" stroke="#000" stroke-width="2.6" stroke-linecap="round"/>
<path d="M4.9 8.6 A7.6 7.6 0 0 1 15.3 8.6" fill="none" stroke="#000" stroke-width="2.6" stroke-linecap="round"/>
<path d="M7.6 11.2 A3.8 3.8 0 0 1 12.6 11.2 L10.1 13.7 Z" fill="#000" stroke="#000" stroke-width="1" stroke-linejoin="round"/>
</svg>
<svg style="position:absolute;left:1577.6px;top:12px" width="15" height="13" viewBox="0 0 15 13">
<path d="M6.36 0.13 A6.2 6.2 0 1 0 12.91 8.17 A5.4 5.4 0 0 1 6.36 0.13 Z" fill="#000"/>
</svg>
<svg style="position:absolute;left:1600.5px;top:12.4px" width="16" height="14" viewBox="0 0 16 14">
<path d="M1.6 11 V7.5 A6.2 6.2 0 0 1 14 7.5 V11" fill="none" stroke="#000" stroke-width="1.9"/>
<rect x="0.6" y="7.6" width="4" height="5.6" rx="1.3" fill="#000"/>
<rect x="11" y="7.6" width="4" height="5.6" rx="1.3" fill="#000"/>
</svg>
<svg style="position:absolute;left:1675px;top:8.5px" width="44" height="20" viewBox="0 0 44 20">
<rect x="1.8" y="1.5" width="35" height="16.6" rx="4.5" fill="none" stroke="#9a9a9a" stroke-width="1.3"/>
<rect x="4" y="3.8" width="27.6" height="11.6" rx="2.2" fill="#000"/>
<path d="M38.5 7.2 Q40.8 8 40.8 9.8 Q40.8 11.6 38.5 12.4 Z" fill="#9a9a9a"/>
</svg>
</body></html>
